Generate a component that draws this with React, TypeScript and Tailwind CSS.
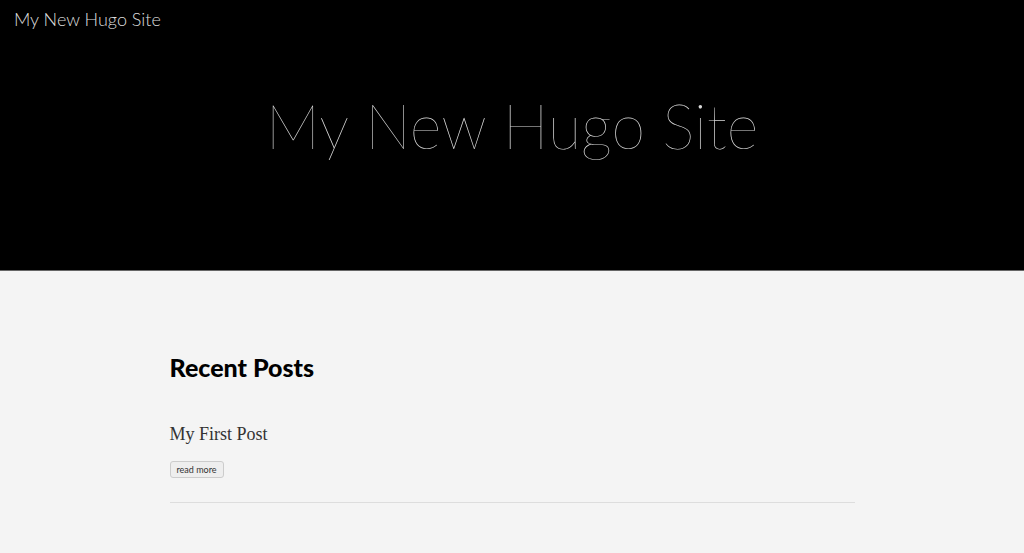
export default function App() {
  return (
    <div className="min-h-[553px] bg-[#f4f4f4]">
      <header className="h-[271px] bg-black border-b border-[#666] flex flex-col">
        <div className="px-[14px] pt-[6px]">
          <a
            href="#"
            className="text-[18px] font-light text-[#ddd] font-['Lato',sans-serif]"
          >
            My New Hugo Site
          </a>
        </div>
        <div className="flex justify-center pt-[62px]">
          <h1 className="text-[61px] font-thin text-[#d8d8d8] leading-none font-['Lato',sans-serif]">
            My New Hugo Site
          </h1>
        </div>
      </header>
      <main className="flex justify-center pt-[84px]">
        <div className="w-[685px]">
          <h2 className="text-[25px] font-black text-black leading-none font-['Lato',sans-serif]">
            Recent Posts
          </h2>
          <article className="mt-[41px] pb-[23px] border-b border-[#ddd]">
            <h3 className="text-[18px] text-[#333] font-['Liberation_Serif',serif]">
              My First Post
            </h3>
            <button className="mt-[13px] px-[6px] h-[17px] text-[9px] leading-none text-[#333] bg-[#eee] border border-[#ccc] rounded-[3px] font-['Lato',sans-serif]">
              read more
            </button>
          </article>
        </div>
      </main>
    </div>
  );
}
